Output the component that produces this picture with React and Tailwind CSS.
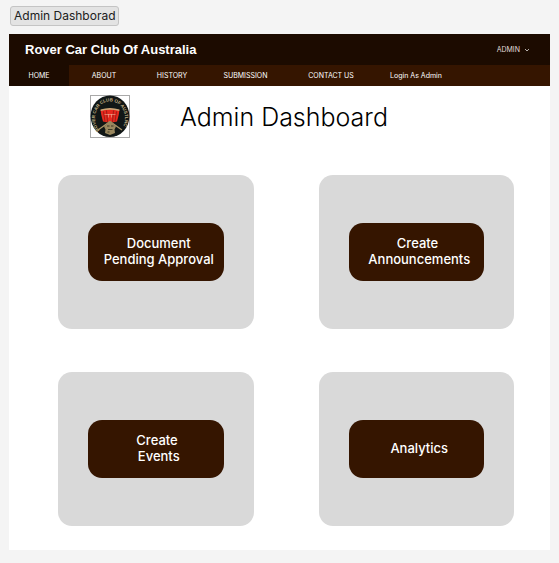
const navLinks = [
  { label: 'HOME', style: 'w-[60px] bg-[#1c0b00]' },
  { label: 'ABOUT', style: 'w-[70px]' },
  { label: 'HISTORY', style: 'w-[66px]' },
  { label: 'SUBMISSION', style: 'w-[81px]' },
  { label: 'CONTACT US', style: 'w-[90px]' },
  { label: 'Login As Admin', style: 'w-[80px]' },
];

const actions = [
  ['Document', 'Pending Approval'],
  ['Create\u00a0', 'Announcements'],
  ['Create\u00a0', 'Events'],
  ['Analytics'],
];

function ClubLogo() {
  return (
    <svg
      viewBox="0 0 40 43"
      className="h-[43px] w-10 shrink-0"
      role="img"
      aria-label="Rover Car Club of Australia"
    >
      <rect x="0.5" y="0.5" width="39" height="42" fill="#fff" stroke="#a9a9a9" />
      <ellipse cx="20" cy="21.3" rx="19.4" ry="20.8" fill="#111716" />
      <path id="logo-ring" d="M9.6 35.2 A15 16.8 0 1 1 30.4 35.2" fill="none" />
      <text fill="#c2b084" fontSize="4.5" fontWeight="700" fontFamily="Liberation Sans, sans-serif">
        <textPath href="#logo-ring">ROVER CAR CLUB OF AUSTLNC</textPath>
      </text>
      <path d="M10.5 15 Q20 12.5 29.5 15 Q29 20 27 26.5 Q20 28.5 13 26.5 Q11 20 10.5 15Z" fill="#e8281e" />
      <path d="M10.5 14.5 Q20 11.5 29.5 14.5 L29.2 16 Q20 13.3 10.8 16Z" fill="#c9a878" />
      <path d="M13.5 16.5 15 26.5M16.5 15.5 17.5 27M23.5 15.5 22.5 27M26.5 16.5 25 26.5" stroke="#7d1813" strokeWidth="0.7" />
      <path d="M14.5 19.5h11M18.5 19v3.5M21.5 19v3.5" stroke="#f1b096" strokeWidth="0.6" />
      <path d="M20 26.5 L8 35 M20 26.5 L32 35" stroke="#a99467" strokeWidth="1.4" />
      <path d="M20 25.5 L23.5 29 L26 31.5 L24.5 34.5 L25 38 L20 40 L15 38 L15.5 34.5 L14 31.5 L17 29Z" fill="#99875e" />
      <path d="M17 31h2.5M21 31h2.5M18 34.5h4.5M17.5 37h2" stroke="#33301f" strokeWidth="0.9" />
    </svg>
  );
}

function ActionCard({ lines }) {
  return (
    <section className="rounded-[14px] bg-[#d9d9d9] px-[30px] py-12">
      <button
        type="button"
        className="flex h-[58px] w-full flex-col items-center justify-center rounded-[14px] bg-[#351500] pb-[2px] pl-[6px] text-[13px] leading-4 font-medium whitespace-nowrap text-white"
      >
        {lines.map((line) => (
          <span key={line}>{line}</span>
        ))}
      </button>
    </section>
  );
}

export default function App() {
  return (
    <div className="min-h-screen bg-[#f4f4f4] px-[9px] pt-[6px] pb-[13px] font-['Inter','Liberation_Sans',sans-serif]">
      <div className="ml-px flex h-5 w-fit items-center rounded-[3px] border border-[#c4c4c4] bg-[#e3e3e3] px-[3px] text-[12px] leading-4 text-[#202020]">
        Admin Dashborad
      </div>

      <div className="mt-2 bg-white">
        <header>
          <div className="flex h-[31px] items-center justify-between bg-[#1c0b00] pr-5 pl-4 text-white">
            <p className="font-['Liberation_Sans',sans-serif] text-[13px] leading-4 font-bold">
              Rover Car Club Of Australia
            </p>
            <button type="button" className="flex items-center gap-1 text-[7px] leading-3 text-[#e0dcda]">
              ADMIN
              <svg viewBox="0 0 6 6" className="size-[6px]" fill="none" stroke="currentColor" strokeWidth="0.8" aria-hidden="true">
                <path d="M1 2 3 4 5 2" />
              </svg>
            </button>
          </div>
          <nav className="flex h-[21px] bg-[#351500] text-[7px] leading-3 whitespace-nowrap text-white">
            {navLinks.map(({ label, style }) => (
              <a key={label} href="#" className={`flex items-center justify-center ${style}`}>
                {label}
              </a>
            ))}
          </nav>
        </header>

        <main className="pr-9 pb-6 pl-[49px]">
          <div className="flex items-center gap-[50px] pt-[9px] pl-8">
            <ClubLogo />
            <h1 className="text-[25px] leading-8 font-light text-black">
              Admin Dashboard
            </h1>
          </div>
          <div className="mt-[37px] grid grid-cols-2 gap-x-[65px] gap-y-[43px]">
            {actions.map((lines) => (
              <ActionCard key={lines.join('')} lines={lines} />
            ))}
          </div>
        </main>
      </div>
    </div>
  );
}
